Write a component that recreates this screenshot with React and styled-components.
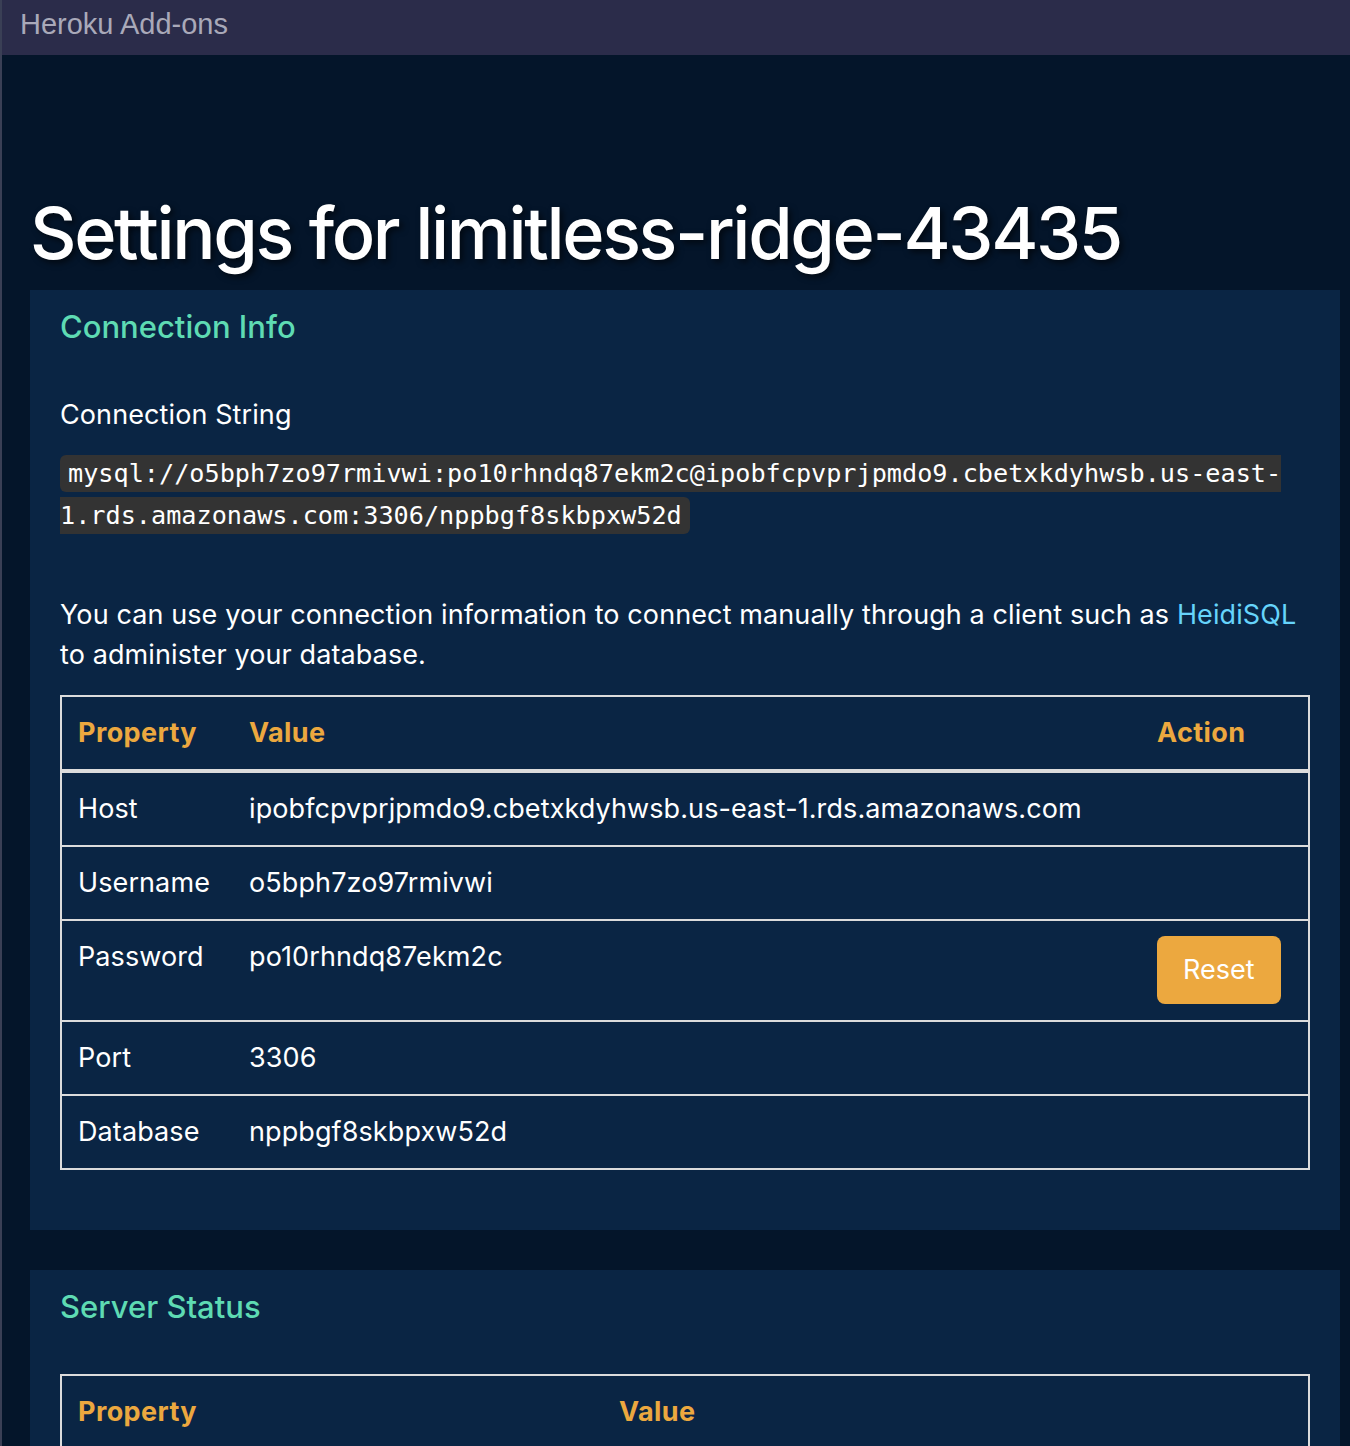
import React from "react";
import styled, { createGlobalStyle } from "styled-components";

const Global = createGlobalStyle`
  html, body { margin: 0; padding: 0; background: #04152a; }
  body { font-family: Inter, "Noto Sans", sans-serif; color: #fff; }
  * { box-sizing: border-box; }
`;

const Frame = styled.div`
  border-left: 2px solid #3a3f55;
  min-height: 1446px;
  background: #04152a;
`;

const TopBar = styled.header`
  height: 55px;
  background: #2b2c4a;
  display: flex;
  align-items: center;
  padding: 0 0 6px 18px;
  font-family: "Liberation Sans", Arial, sans-serif;
  font-size: 29px;
  color: #a9a9b9;
`;

const Main = styled.main`
  padding: 134px 10px 0 28px;
`;

const Title = styled.h1`
  margin: 0 0 14px;
  font-size: 72px;
  font-weight: 500;
  letter-spacing: -2.35px;
  line-height: 87px;
  text-shadow: 3px 3px 6px rgba(0, 0, 0, 0.6);
`;

const Panel = styled.section`
  background: #0a2544;
  padding: 19px 30px 60px;
  margin-bottom: 40px;
`;

const PanelTitle = styled.h2`
  margin: 0 0 ${(p) => p.$gap}px;
  font-size: 31px;
  font-weight: 500;
  line-height: 36px;
  color: #5edbb3;
`;

const Label = styled.p`
  margin: 0 0 19px;
  font-size: 27px;
  letter-spacing: 0.1px;
  line-height: 40px;
`;

const CodeLine = styled.p`
  margin: 0 0 57px;
  line-height: 40px;
`;

const Code = styled.code`
  font-family: "DejaVu Sans Mono", monospace;
  font-size: 25.2px;
  background: #333333;
  padding: 4px 8px;
  border-radius: 6px;
  word-break: break-all;
  box-decoration-break: slice;
  -webkit-box-decoration-break: slice;
`;

const Text = styled.p`
  margin: 0 0 20px;
  font-size: 27px;
  letter-spacing: 0.1px;
  line-height: 40px;
`;

const Link = styled.a`
  color: #66d4fb;
  text-decoration: none;
`;

const Table = styled.table`
  width: 100%;
  border-collapse: collapse;
  border: 2px solid #dcdcdc;
  font-size: 27px;
  letter-spacing: 0.1px;
  line-height: 40px;
`;

const Th = styled.th`
  text-align: left;
  padding: 16px;
  color: #eca83f;
  font-weight: 700;
  letter-spacing: 0.4px;
  border-bottom: 4px solid #dcdcdc;
  width: ${(p) => (p.$w ? `${p.$w}px` : "auto")};
`;

const Tr = styled.tr`
  border-bottom: 2px solid #dcdcdc;
`;

const Td = styled.td`
  padding: 16px;
  vertical-align: top;
`;

const Button = styled.button`
  font-family: Inter, "Noto Sans", sans-serif;
  font-size: 27px;
  line-height: 40px;
  color: #fff;
  background: #eca83f;
  border: none;
  border-radius: 8px;
  padding: 14px 26px;
  margin-top: -1px;
  cursor: pointer;
`;

const rows = [
  ["Host", "ipobfcpvprjpmdo9.cbetxkdyhwsb.us-east-1.rds.amazonaws.com"],
  ["Username", "o5bph7zo97rmivwi"],
  ["Password", "po10rhndq87ekm2c", true],
  ["Port", "3306"],
  ["Database", "nppbgf8skbpxw52d"],
];

export default function App() {
  return (
    <>
      <Global />
      <Frame>
        <TopBar>Heroku Add-ons</TopBar>
        <Main>
          <Title>Settings for limitless-ridge-43435</Title>
          <Panel>
            <PanelTitle $gap={50}>Connection Info</PanelTitle>
            <Label>Connection String</Label>
            <CodeLine>
              <Code>
                mysql://o5bph7zo97rmivwi:po10rhndq87ekm2c@ipobfcpvprjpmdo9.cbetxkdyhwsb.us-east-1.rds.amazonaws.com:3306/nppbgf8skbpxw52d
              </Code>
            </CodeLine>
            <Text>
              You can use your connection information to connect manually through a client such as{" "}
              <Link href="#">HeidiSQL</Link> to administer your database.
            </Text>
            <Table>
              <thead>
                <tr>
                  <Th $w={172}>Property</Th>
                  <Th>Value</Th>
                  <Th $w={168}>Action</Th>
                </tr>
              </thead>
              <tbody>
                {rows.map(([k, v, reset]) => (
                  <Tr key={k}>
                    <Td>{k}</Td>
                    <Td>{v}</Td>
                    <Td>{reset && <Button>Reset</Button>}</Td>
                  </Tr>
                ))}
              </tbody>
            </Table>
          </Panel>
          <Panel>
            <PanelTitle $gap={49}>Server Status</PanelTitle>
            <Table>
              <thead>
                <tr>
                  <Th $w={542}>Property</Th>
                  <Th>Value</Th>
                </tr>
              </thead>
              <tbody>
                <Tr>
                  <Td>Status</Td>
                  <Td>Running</Td>
                </Tr>
              </tbody>
            </Table>
          </Panel>
        </Main>
      </Frame>
    </>
  );
}
